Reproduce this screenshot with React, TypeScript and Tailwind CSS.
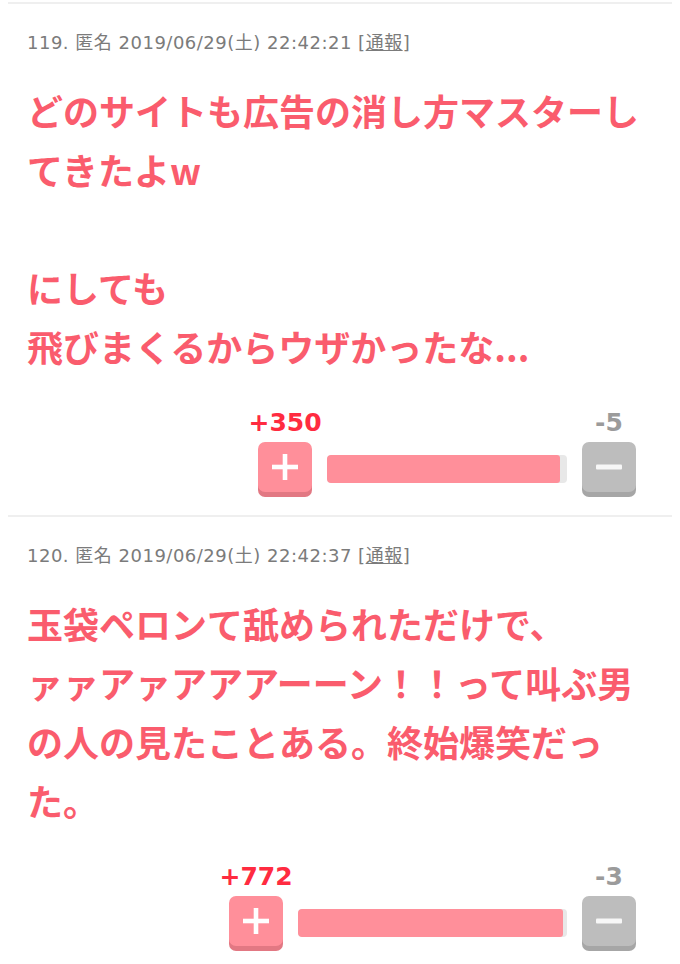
const POSTS = [
  {
    no: 119,
    date: "2019/06/29(土) 22:42:21",
    lines: [
      "どのサイトも広告の消し方マスターし",
      "てきたよw",
      "",
      "にしても",
      "飛びまくるからウザかったな...",
    ],
    plus: 350,
    minus: 5,
    barWidth: "w-[240px]",
    fill: 97,
  },
  {
    no: 120,
    date: "2019/06/29(土) 22:42:37",
    lines: [
      "玉袋ペロンて舐められただけで、",
      "ァァアァアアアーーン！！って叫ぶ男",
      "の人の見たことある。終始爆笑だっ",
      "た。",
    ],
    plus: 772,
    minus: 3,
    barWidth: "w-[269px]",
    fill: 98.5,
  },
];

function PlusIcon() {
  return (
    <svg width="26" height="26" viewBox="0 0 26 26">
      <rect x="10.7" y="0" width="4.6" height="26" fill="#ffffff" />
      <rect x="0" y="10.7" width="26" height="4.6" fill="#ffffff" />
    </svg>
  );
}

function MinusIcon() {
  return (
    <svg width="26" height="6" viewBox="0 0 26 6">
      <rect x="0" y="0.5" width="26" height="5" rx="1" fill="#f7f7f7" />
    </svg>
  );
}

function Post({ post }: { post: (typeof POSTS)[number] }) {
  return (
    <div className="mx-2 border-b-2 border-[#efefef] px-[19px] pt-[27px] pb-[23px]">
      {/* meta */}
      <div className="text-[18px] leading-[24px] text-[#7b7b7b] [font-family:'DejaVu_Sans','Noto_Sans_CJK_JP',sans-serif] tracking-[0.5px] whitespace-nowrap">
        {post.no}. 匿名 {post.date} [<span className="underline">通報</span>]
      </div>

      {/* body */}
      <div className="mt-[26px] text-[36px] leading-[59px] font-bold text-[#fa5c6d] [font-family:'Noto_Sans_CJK_JP',sans-serif]">
        {post.lines.map((line, i) => (
          <div key={i} className="whitespace-nowrap h-[59px]">
            {line}
          </div>
        ))}
      </div>

      {/* votes */}
      <div className="mt-[35px] flex justify-end pr-[17px]">
        <div className="flex items-end gap-[15px]">
          <div className="w-[54px] flex flex-col items-center">
            <div className="text-[25px] leading-[24px] font-bold text-[#ff2b40] [font-family:'DejaVu_Sans',sans-serif] whitespace-nowrap">
              +{post.plus}
            </div>
            <div className="mt-[7px] w-[54px] h-[50px] rounded-[7px] bg-[#ff8f9a] shadow-[0_5px_0_#e27883] flex items-center justify-center">
              <PlusIcon />
            </div>
          </div>

          <div className={`${post.barWidth} h-[28px] mb-[9px] rounded-[4px] bg-[#e8e8e8] overflow-hidden`}>
            <div
              className="h-full bg-[#ff8f9a] rounded-[3px]"
              style={{ width: `${post.fill}%` }}
            />
          </div>

          <div className="w-[54px] flex flex-col items-center">
            <div className="text-[25px] leading-[24px] font-bold text-[#9b9b9b] [font-family:'DejaVu_Sans',sans-serif] whitespace-nowrap">
              -{post.minus}
            </div>
            <div className="mt-[7px] w-[54px] h-[50px] rounded-[7px] bg-[#bdbdbd] shadow-[0_5px_0_#a6a6a6] flex items-center justify-center">
              <MinusIcon />
            </div>
          </div>
        </div>
      </div>
    </div>
  );
}

export default function App() {
  return (
    <div className="w-[680px] h-[964px] bg-white overflow-hidden">
      <div className="mx-2 mt-[2px] h-[2px] bg-[#efefef]" />
      {POSTS.map((post) => (
        <Post key={post.no} post={post} />
      ))}
    </div>
  );
}
